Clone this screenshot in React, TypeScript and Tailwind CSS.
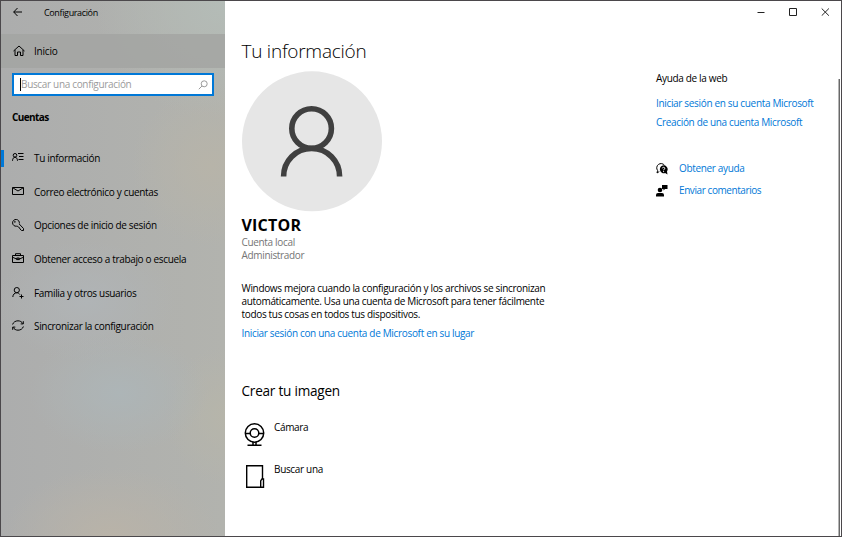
import type { ReactNode } from "react";

function Icon({ children, size = 12, className = "" }: { children: ReactNode; size?: number; className?: string }) {
  return (
    <svg width={size} height={size} viewBox={`0 0 ${size} ${size}`} fill="none" stroke="currentColor" strokeWidth="1" className={`shrink-0 ${className}`}>
      {children}
    </svg>
  );
}

const items: { label: string; icon: ReactNode }[] = [
  {
    label: "Tu información",
    icon: (
      <>
        <circle cx="3" cy="3.300" r="1.800" />
        <path d="M.5 8.800C.6 6.500 1.500 5.300 3 5.300S5.400 6.500 5.500 8.800M6 1.500H11.500M7 4.500H11.500M6.500 7.500H11.500" />
      </>
    ),
  },
  { label: "Correo electrónico y cuentas", icon: <path d="M.5 1.500H11.500V8.500H.5ZM.8 1.800 6 5 11.200 1.800" /> },
  {
    label: "Opciones de inicio de sesión",
    icon: (
      <>
        <path d="M7.300 4.600A3.400 3.400 0 1 0 4.500 7.200L5.500 7.200 6.400 8.200 7.300 8.500 8 10 9.500 11.500H11.500V9.500L7.200 5" />
        <circle cx="2.900" cy="2.900" r=".4" />
      </>
    ),
  },
  {
    label: "Obtener acceso a trabajo o escuela",
    icon: <path d="M.5 2.500H11.500V9.500H.5ZM3.500 2.500V.7H8.500V2.500M.5 4.200 4.500 6H7.500L11.500 4.200M4.700 5V6.600H7.300V5Z" />,
  },
  {
    label: "Familia y otros usuarios",
    icon: (
      <>
        <circle cx="4.800" cy="3.100" r="2.600" />
        <path d="M.8 10C1 7.500 2.500 5.800 4.800 5.800 6.300 5.800 7.200 6.500 7.800 7.500M9.500 7.500V11.500M7.500 9.500H11.500" />
      </>
    ),
  },
  {
    label: "Sincronizar la configuración",
    icon: <path d="M.6 4.500C1.300 2.200 3.500 .8 6 .8 8 .8 9.900 1.800 10.900 3.700M11.300 1.200V3.900H8.700M11.400 6.500C10.700 8.800 8.500 10.200 6 10.200 4 10.200 2.100 9.200 1.100 7.300M.7 9.800V7.100H3.300" />,
  },
];

function Sidebar() {
  return (
    <aside className="flex w-[224px] shrink-0 flex-col bg-[#b1b2b0] bg-[radial-gradient(90px_60px_at_118px_392px,#adb5b7,#adb5b700),radial-gradient(60px_70px_at_224px_415px,#b6b5aa,#b6b5aa00),radial-gradient(110px_70px_at_110px_536px,#b9b3a8,#b9b3a800),radial-gradient(80px_80px_at_210px_165px,#b7b4a9,#b7b4a900),radial-gradient(90px_60px_at_85px_300px,#b0b4b6,#b0b4b600),radial-gradient(130px_120px_at_224px_0px,#b4bcb7,#b4bcb700),linear-gradient(90deg,#acadad,#b2b3ae)]">
      <div className="flex h-[33px] items-start pl-3 pt-[5px]">
        <Icon size={10} className="mt-[1px]"><path d="M.7 5H9M4.500 1 .7 5 4.500 9" /></Icon>
        <span className="ml-[21px] text-[9px] leading-[13px] tracking-[-0.36px]">Configuración</span>
      </div>
      <div className="flex h-[34px] items-center bg-[#a2a4a1]/80 pl-3">
        <Icon><path d="M.5 6 6 1 11.500 6M2 5V10.500H4.500V7H7.500V10.500H10V5" /></Icon>
        <span className="ml-[9px] mt-px tracking-[-0.2px]">Inicio</span>
      </div>
      <div className="ml-[11px] mt-[5px] flex h-[23px] w-[202px] shrink-0 items-center border-2 border-[#0078d7] bg-white pl-[6px] pr-[4px] text-[#9b9b9b]">
        <span className="h-[13px] w-px bg-black" />
        <span>Buscar una configuración</span>
        <Icon size={10} className="ml-auto"><circle cx="6.200" cy="3.800" r="3" /><path d="M4 6 .8 9.200" /></Icon>
      </div>
      <h2 className="mb-[17px] ml-[11px] mt-[14px] font-bold leading-[15px] tracking-[-0.6px]">Cuentas</h2>
      <nav>
        {items.map((item, i) => (
          <div key={item.label} className="flex h-[33.6px] items-center">
            <span className={`h-[17px] w-[3px] ${i === 0 ? "bg-[#0078d7]" : ""}`} />
            <Icon className="-mt-[1px] ml-[8px]">{item.icon}</Icon>
            <span className="ml-[10px] whitespace-nowrap">{item.label}</span>
          </div>
        ))}
      </nav>
    </aside>
  );
}

function WindowControls() {
  return (
    <div className="flex h-[33px] shrink-0 items-start justify-end gap-[23px] pr-[11px] pt-[6px] text-[#222]">
      <Icon size={9}><path d="M.5 5.500H7.500" /></Icon>
      <Icon size={9}><path d="M.5 1.500H7.500V8.500H.5Z" /></Icon>
      <Icon size={9}><path d="M.7 1.500 7.900 8.700M7.900 1.500 .7 8.700" /></Icon>
    </div>
  );
}

export default function App() {
  return (
    <div className="flex h-[537px] w-[842px] overflow-hidden border border-[#4b484b] bg-white font-['Open_Sans','Noto_Sans',sans-serif] text-[10px] leading-[13px] tracking-[-0.33px] text-black">
      <Sidebar />
      <main className="flex w-[415px] shrink-0 flex-col pl-[16.500px]">
        <h1 className="mt-[37px] text-[19px] font-light leading-[26px] tracking-[-0.25px]">Tu información</h1>
        <svg width="141" height="141" viewBox="0 0 141 141" className="mt-[7px] shrink-0" fill="none">
          <circle cx="70" cy="70.300" r="70" fill="#e6e6e6" />
          <g stroke="#404040" strokeWidth="5.600">
            <circle cx="69.600" cy="57.500" r="19.800" />
            <path d="M41.600 105.500C41.600 90 53.600 77.500 69.600 77.500S97.600 90 97.600 105.500" />
          </g>
        </svg>
        <div className="mt-[3px] text-[16px] font-bold leading-[21px] tracking-[0.2px]">VICTOR</div>
        <div className="text-[#757575]">Cuenta local<br />Administrador</div>
        <p className="mt-[20px] whitespace-nowrap">
          Windows mejora cuando la configuración y los archivos se sincronizan<br />
          automáticamente. Usa una cuenta de Microsoft para tener fácilmente<br />
          todos tus cosas en todos tus dispositivos.
        </p>
        <a className="mt-[6px] text-[#0078d7]">Iniciar sesión con una cuenta de Microsoft en su lugar</a>
        <h2 className="mt-[41px] text-[13.600px] leading-[20px] tracking-[-0.24px]">Crear tu imagen</h2>
        <div className="mt-[20px] flex h-[42px] items-start">
          <svg width="26" height="26" viewBox="0 0 26 26" fill="none" stroke="#000" strokeWidth="1.500">
            <circle cx="12.500" cy="12" r="9.200" /><circle cx="12.500" cy="12" r="4.300" />
            <path d="M3.300 12.500H8.200M16.800 12.500H21.700M11 21V23.500M14 21V23.500M5.500 24.200H19.500" />
          </svg>
          <span className="ml-[6.500px]">Cámara</span>
        </div>
        <div className="flex items-start">
          <svg width="26" height="26" viewBox="0 0 26 26" fill="none" stroke="#000" strokeWidth="1.400">
            <path d="M20.500 16V2.700H4.700V24.300H20.500M18.700 24.300V18L19.900 16H21.500V24.300H18.700" />
          </svg>
          <span className="ml-[6.500px]">Buscar una</span>
        </div>
      </main>
      <div className="flex min-w-0 grow flex-col">
        <WindowControls />
        <div className="flex min-h-0 grow">
          <aside className="flex grow flex-col pl-4 pt-[38px]">
            <h3>Ayuda de la web</h3>
            <a className="mt-[12px] whitespace-nowrap text-[#0078d7]">Iniciar sesión en su cuenta Microsoft</a>
            <a className="mt-[6px] whitespace-nowrap text-[#0078d7]">Creación de una cuenta Microsoft</a>
            <div className="mt-[33px] flex items-center">
              <Icon><path d="M3.300 8.500 1 10 1.600 7.500A3.800 3.800 0 1 1 8.500 2.300" /><path d="M7.600 2.300a4 4 0 1 0 1.500 7.800L11.500 11.500 11 8.500A4 4 0 0 0 7.600 2.300Z" fill="currentColor" stroke="none" /><path d="M6.300 5.300C6.500 3.900 8.900 4 8.800 5.300 8.700 6.200 7.600 6.200 7.600 7.300M7.600 8.100V9.100" stroke="#fff" strokeWidth="1" /></Icon>
              <span className="ml-[11px] text-[#0078d7]">Obtener ayuda</span>
            </div>
            <div className="mt-[9px] flex items-center">
              <Icon><g fill="currentColor" stroke="none"><circle cx="4" cy="5" r="2.300" /><path d="M0 11.500V10Q0 8 2 8H6Q8 8 8 10V11.500ZM6 0H11.500V4H9L7.500 5.500V4H6Z" /></g></Icon>
              <span className="ml-[11px] tracking-[-0.42px] text-[#0078d7]">Enviar comentarios</span>
            </div>
          </aside>
          <div className="mr-[1px] mt-[45px] w-[2px] shrink-0 border-l border-[#b5b5b5] bg-[#686868]" />
        </div>
      </div>
    </div>
  );
}
